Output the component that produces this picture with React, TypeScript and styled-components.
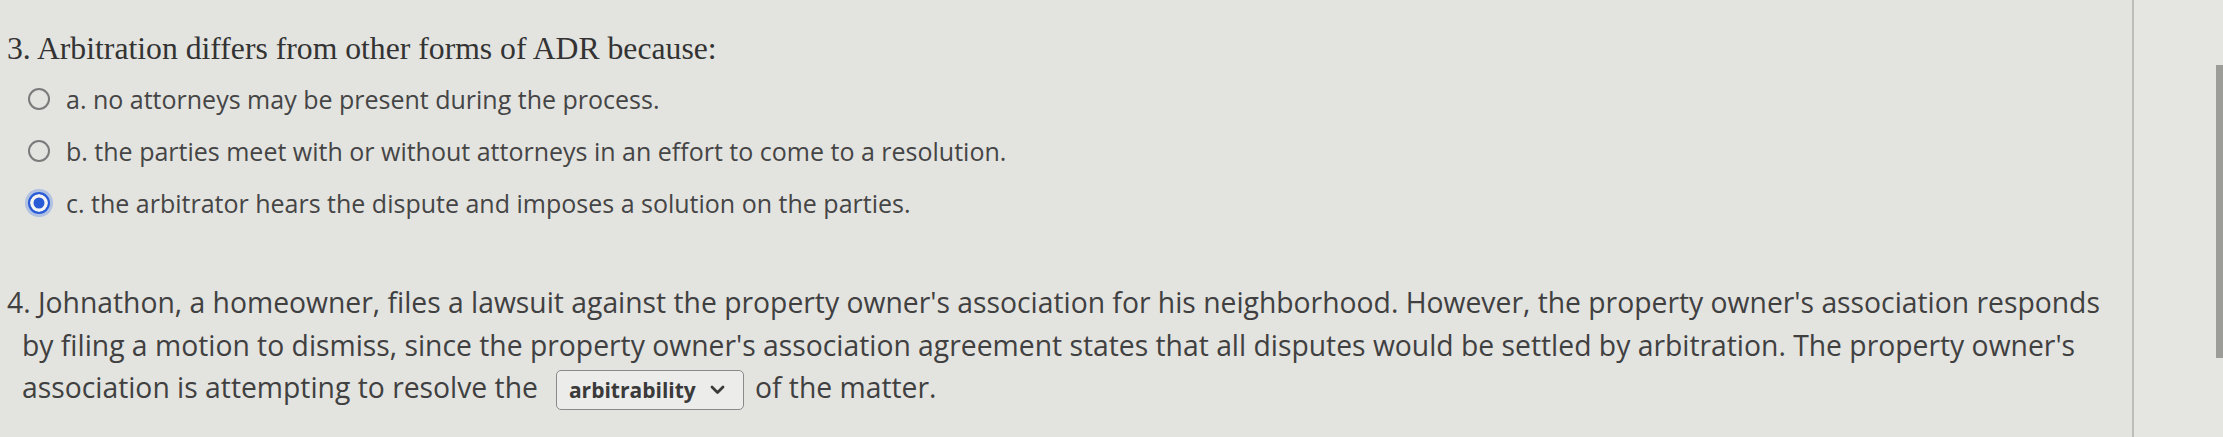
import React from 'react';
import styled, { createGlobalStyle } from 'styled-components';

const GlobalStyle = createGlobalStyle`
  html, body {
    margin: 0;
    padding: 0;
    background: #e3e3e0;
  }
  body {
    font-family: 'Open Sans', 'Liberation Sans', sans-serif;
  }
`;

const Page = styled.div`
  display: flex;
  width: 2223px;
  height: 437px;
  overflow: hidden;
  background: #e3e3e0;
`;

const Main = styled.div`
  flex: 0 0 2132px;
  display: flex;
  flex-direction: column;
  padding-top: 30px;
  box-sizing: border-box;
`;

const Side = styled.div`
  flex: 1;
  display: flex;
  justify-content: flex-end;
  align-items: flex-start;
  border-left: 2px solid #bcbcb8;
  background: #e5e5e2;
`;

const ScrollThumb = styled.div`
  width: 7px;
  height: 293px;
  margin-top: 65px;
  background: #9c9c99;
`;

const Heading = styled.h2`
  margin: 0 0 0 7px;
  font-family: 'Liberation Serif', 'DejaVu Serif', serif;
  font-weight: normal;
  font-size: 31.7px;
  line-height: 38px;
  color: #333333;
`;

const Options = styled.div`
  display: flex;
  flex-direction: column;
  margin-top: 5px;
  padding-left: 28px;
`;

const OptionRow = styled.label`
  display: flex;
  align-items: center;
  gap: 16px;
  height: 52px;
  font-size: 25px;
  color: #454545;
`;

const Radio = styled.span<{ $checked?: boolean }>`
  flex: 0 0 auto;
  box-sizing: border-box;
  width: 22px;
  height: 22px;
  border-radius: 50%;
  border: ${(p) => (p.$checked ? '2.5px solid #2a5bd7' : '2.5px solid #7b7b7b')};
  background: ${(p) => (p.$checked ? '#2a5bd7' : 'transparent')};
  box-shadow: ${(p) =>
    p.$checked ? 'inset 0 0 0 3.5px #f4f4f4, 0 0 0 3px rgba(80, 130, 230, 0.35)' : 'none'};
`;

const Question = styled.p`
  margin: 52px 0 0 0;
  padding-left: 22px;
  text-indent: -15px;
  font-size: 28.3px;
  line-height: 42.5px;
  color: #404040;
`;

const Select = styled.span`
  display: inline-flex;
  align-items: center;
  gap: 14px;
  box-sizing: border-box;
  width: 188px;
  height: 40px;
  margin: 0 11px 0 18px;
  padding: 0 10px 0 12px;
  vertical-align: middle;
  text-indent: 0;
  border: 1.5px solid #8a8a8a;
  border-radius: 5px;
  background: #ececea;
  font-size: 21px;
  font-weight: 700;
  color: #3a3a3a;
`;

const Chevron = () => (
  <svg width="15" height="10" viewBox="0 0 15 10">
    <path d="M2 2 L7.5 7.5 L13 2" fill="none" stroke="#3a3a3a" strokeWidth="2.8" strokeLinecap="round" strokeLinejoin="round" />
  </svg>
);

const options = [
  { id: 'a', text: 'a. no attorneys may be present during the process.' },
  { id: 'b', text: 'b. the parties meet with or without attorneys in an effort to come to a resolution.' },
  { id: 'c', text: 'c. the arbitrator hears the dispute and imposes a solution on the parties.' },
];

const App = () => {
  const selected = 'c';

  return (
    <>
      <GlobalStyle />
      <Page>
        <Main>
          <Heading>3. Arbitration differs from other forms of ADR because:</Heading>
          <Options>
            {options.map((o) => (
              <OptionRow key={o.id}>
                <Radio $checked={o.id === selected} />
                {o.text}
              </OptionRow>
            ))}
          </Options>
          <Question>
            4. Johnathon, a homeowner, files a lawsuit against the property owner's association for his neighborhood. However, the property owner's association responds
            <br />
            by filing a motion to dismiss, since the property owner's association agreement states that all disputes would be settled by arbitration. The property owner's
            <br />
            association is attempting to resolve the
            <Select>
              arbitrability
              <Chevron />
            </Select>
            of the matter.
          </Question>
        </Main>
        <Side>
          <ScrollThumb />
        </Side>
      </Page>
    </>
  );
};

export default App;
